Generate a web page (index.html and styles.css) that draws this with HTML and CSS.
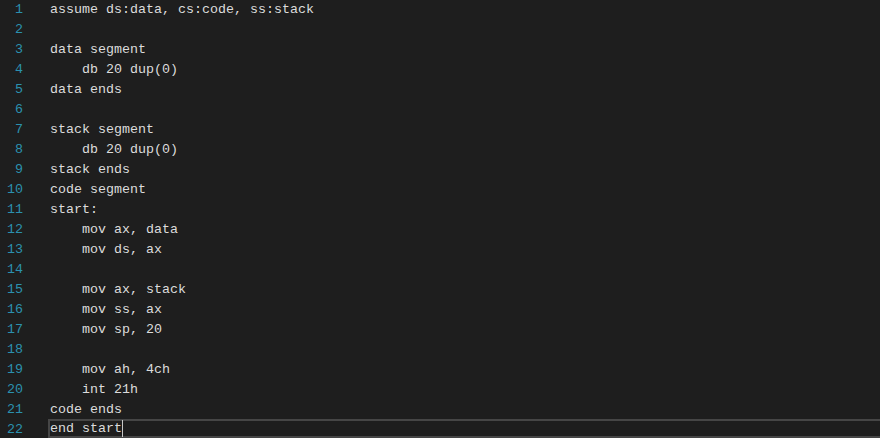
FILE: index.html
```html
<!DOCTYPE html>
<html>
<head>
<meta charset="utf-8">
<link rel="stylesheet" href="styles.css">
</head>
<body>
<div class="editor">
  <div class="gutter">
    <div class="num">1</div><div class="num">2</div><div class="num">3</div><div class="num">4</div><div class="num">5</div><div class="num">6</div><div class="num">7</div><div class="num">8</div><div class="num">9</div><div class="num">10</div><div class="num">11</div><div class="num">12</div><div class="num">13</div><div class="num">14</div><div class="num">15</div><div class="num">16</div><div class="num">17</div><div class="num">18</div><div class="num">19</div><div class="num">20</div><div class="num">21</div><div class="num">22</div>
  </div>
  <div class="code">
<div class="line">assume ds:data, cs:code, ss:stack</div>
<div class="line"></div>
<div class="line">data segment</div>
<div class="line">    db 20 dup(0)</div>
<div class="line">data ends</div>
<div class="line"></div>
<div class="line">stack segment</div>
<div class="line">    db 20 dup(0)</div>
<div class="line">stack ends</div>
<div class="line">code segment</div>
<div class="line">start:</div>
<div class="line">    mov ax, data</div>
<div class="line">    mov ds, ax</div>
<div class="line"></div>
<div class="line">    mov ax, stack</div>
<div class="line">    mov ss, ax</div>
<div class="line">    mov sp, 20</div>
<div class="line"></div>
<div class="line">    mov ah, 4ch</div>
<div class="line">    int 21h</div>
<div class="line">code ends</div>
<div class="line current">end start<span class="caret"></span></div>
  </div>
</div>
</body>
</html>
```
FILE: styles.css
```css
html, body {
  margin: 0;
  padding: 0;
  background: #1e1e1e;
  height: 100%;
  overflow: hidden;
}
.editor {
  display: flex;
  font-family: "Liberation Mono", "DejaVu Sans Mono", monospace;
  font-size: 13.33px;
  color: #dcdcdc;
}
.gutter {
  width: 23px;
  flex: none;
  text-align: right;
  color: #2b91af;
}
.num {
  height: 20px;
  line-height: 20px;
}
.code {
  flex: 1;
  padding-left: 25px;
}
.line {
  height: 20px;
  line-height: 20px;
  white-space: pre;
  padding-left: 2px;
}
.line.current {
  padding-left: 0;
  border: 2px solid #464646;
  border-right: none;
  box-sizing: border-box;
  line-height: 16px;
  margin-top: -1px;
  height: 19px;
}
.caret {
  display: inline-block;
  width: 1px;
  height: 17px;
  background: #c8c8c8;
  vertical-align: top;
  margin-top: -1px;
}
```
